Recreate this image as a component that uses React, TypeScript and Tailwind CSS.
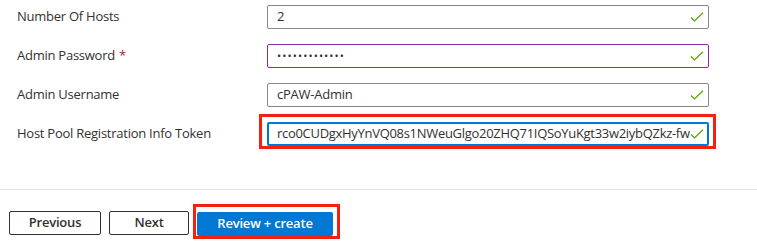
import React from "react";

const Check = () => (
  <svg width="14" height="10" viewBox="0 0 14 10" className="shrink-0">
    <path d="M1 5.5 L4.5 9 L13 0.8" fill="none" stroke="#57a300" strokeWidth="1.2" />
  </svg>
);

function Row({ label, required, children }: { label: string; required?: boolean; children: React.ReactNode }) {
  return (
    <div className="flex items-center h-[24px]">
      <div className="w-[267px] pl-[17px] text-[13px] text-[#323130] tracking-[-0.25px]">
        {label}
        {required && <span className="text-[#a4262c] ml-[4px]">*</span>}
      </div>
      {children}
    </div>
  );
}

export default function App() {
  return (
    <div className="w-[757px] h-[245px] bg-white relative overflow-hidden" style={{ fontFamily: '"Open Sans", "Noto Sans", sans-serif' }}>
      <div className="flex flex-col gap-[15px] pt-[5px]">
        <Row label="Number Of Hosts">
          <div className="w-[442px] h-[24px] border border-[#8a8886] rounded-[2px] flex items-center pl-[9px] pr-[4px] text-[13px] text-[#323130]">
            <span className="flex-1">2</span>
            <Check />
          </div>
        </Row>
        <Row label="Admin Password" required>
          <div className="w-[442px] h-[24px] border border-[#8a2da5] rounded-[2px] flex items-center pl-[9px] pr-[4px] text-[13px] text-[#323130]">
            <span className="flex-1 tracking-[1.1px] text-[11px]">•••••••••••••</span>
            <Check />
          </div>
        </Row>
        <Row label="Admin Username">
          <div className="w-[442px] h-[24px] border border-[#8a8886] rounded-[2px] flex items-center pl-[9px] pr-[4px] text-[13px] text-[#323130] tracking-[-0.25px]">
            <span className="flex-1">cPAW-Admin</span>
            <Check />
          </div>
        </Row>
        <Row label="Host Pool Registration Info Token">
          <div className="relative">
            <div className="w-[442px] h-[24px] border-2 border-[#0078d4] rounded-[2px] flex items-center pl-[8px] pr-[3px] text-[13px] text-[#323130] tracking-[-0.3px]">
              <span className="flex-1 overflow-hidden whitespace-nowrap">rco0CUDgxHyYnVQ08s1NWeuGlgo20ZHQ71IQSoYuKgt33w2iybQZkz-fw</span>
              <Check />
            </div>
            <div className="absolute left-[-8px] top-[-8px] w-[457px] h-[35px] border-[3px] border-[#f5200f] pointer-events-none" />
          </div>
        </Row>
      </div>
      <div className="mt-[43px] h-px bg-[#e1dfdd]" />
      <div className="flex items-center gap-[8px] pl-[9px] pt-[20px]">
        <button className="w-[92px] h-[24px] border border-[#323130] rounded-[2px] text-[13px] font-semibold text-[#323130] bg-white tracking-[-0.2px]">Previous</button>
        <button className="w-[80px] h-[24px] border border-[#323130] rounded-[2px] text-[13px] font-semibold text-[#323130] bg-white tracking-[-0.2px]">Next</button>
        <div className="relative">
          <button className="w-[136px] h-[24px] rounded-[2px] text-[13px] font-semibold text-white bg-[#0078d4] tracking-[-0.2px]">Review + create</button>
          <div className="absolute left-[-4px] top-[-6px] w-[147px] h-[35px] border-[3px] border-[#f5200f] pointer-events-none" />
        </div>
      </div>
    </div>
  );
}
